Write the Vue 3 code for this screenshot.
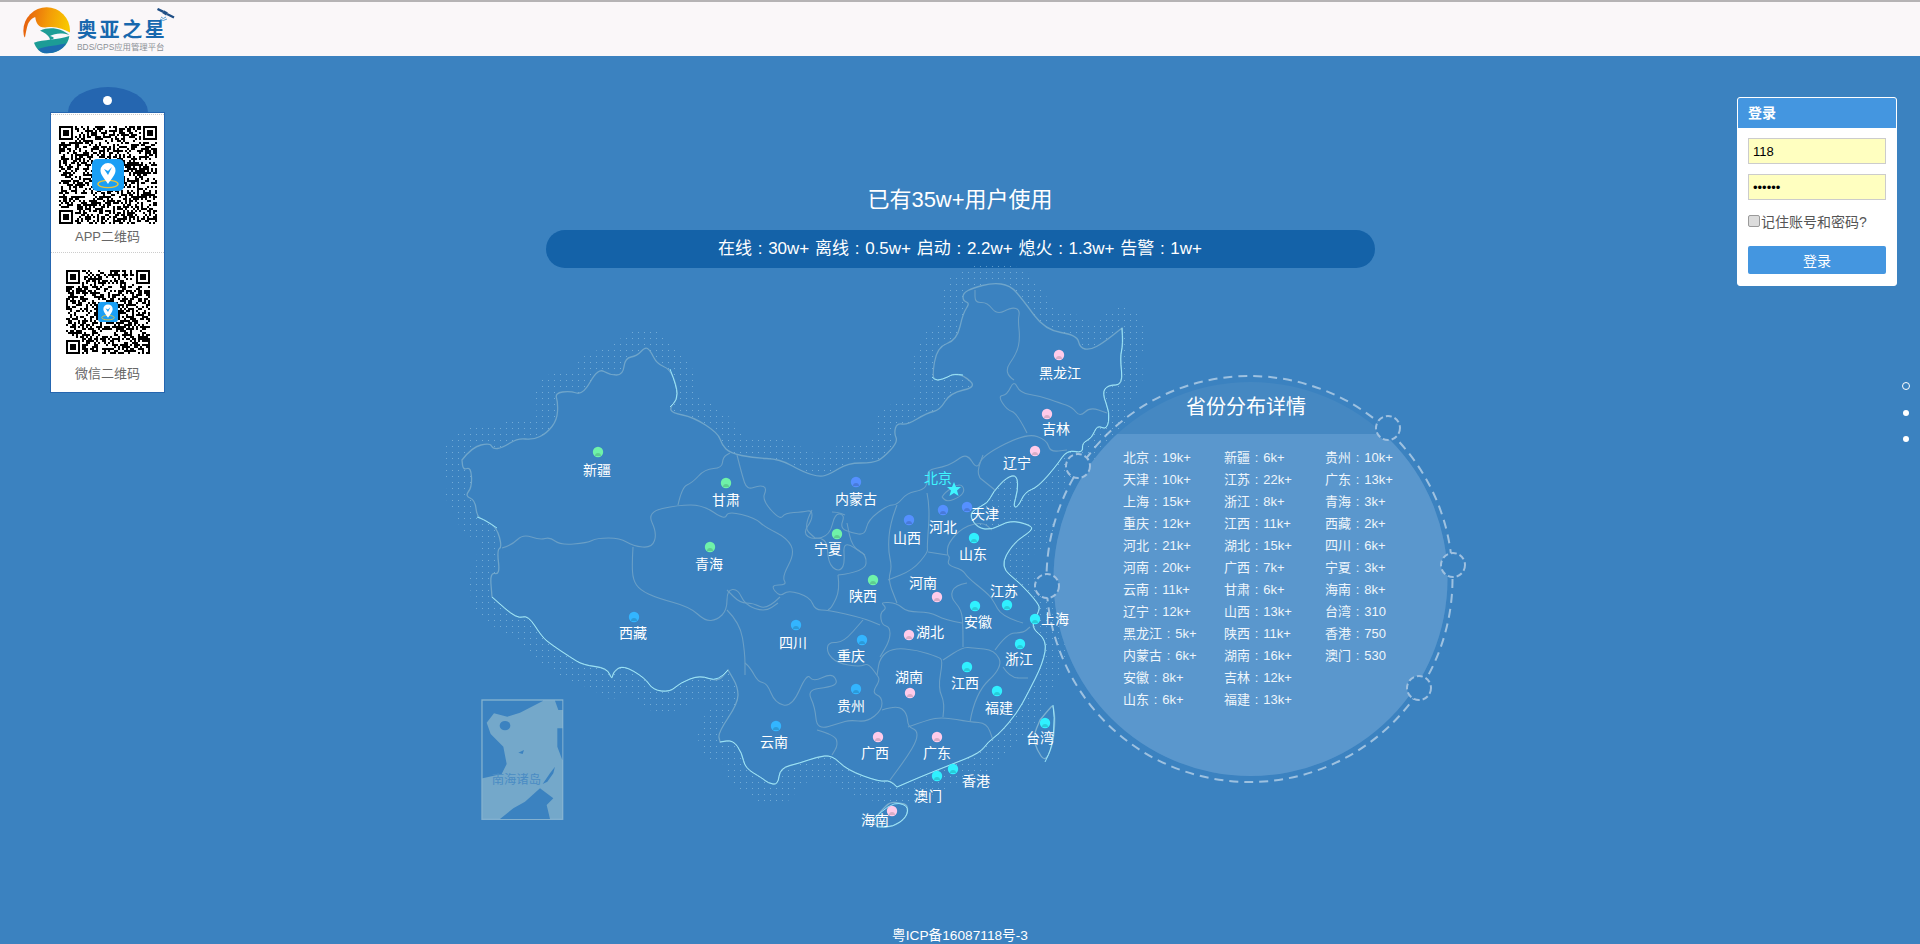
<template>
  <div class="page">
    <header class="top-bar">
      <svg class="logo-mark" width="50" height="50" viewBox="66 18 150 150">
        <defs>
          <linearGradient id="sun" x1="0" y1="0" x2="1" y2="0.2">
            <stop offset="0" stop-color="#e4560f" />
            <stop offset="0.55" stop-color="#f39a08" />
            <stop offset="1" stop-color="#f8c800" />
          </linearGradient>
        </defs>
        <circle cx="140" cy="92" r="70" fill="url(#sun)" />
        <path d="M75 112 C78 95 80 85 84 72 C90 60 100 52 106 52 C108 72 118 86 140 82 C165 78 190 85 214 100 L214 168 L66 168 L66 112Z" fill="#faf7f9" />
        <path d="M120 92 C150 78 185 85 208 105 C185 98 165 100 150 108 C165 112 165 116 150 120 C150 108 135 98 120 92Z" fill="#1f9d96" />
        <path d="M102 128 C130 118 175 120 208 108 C205 135 180 160 140 160 C120 160 108 145 102 128Z" fill="#1c9c96" />
        <path d="M114 147 C140 138 178 136 198 130 C188 150 165 160 140 160 C128 160 120 155 114 147Z" fill="#1d6cb0" />
      </svg>
      <div class="logo-text">
        <div class="logo-name">奥亚之星</div>
        <div class="logo-sub">BDS/GPS应用管理平台</div>
      </div>
      <svg class="satellite" width="18" height="14" viewBox="0 0 18 14">
        <path d="M0.500 1 L6 3.600 M10 6 L17 9.500" stroke="#1f4f86" stroke-width="2.400" fill="none" />
        <path d="M6 3.600 L10 6" stroke="#1f4f86" stroke-width="3.400" fill="none" />
        <path d="M4 9 Q6 12 9 9 M3 11 Q6 14 10 11" stroke="#2f86c8" stroke-width="0.800" fill="none" />
      </svg>
    </header>

    <main class="main">
      <svg class="map" width="1920" height="872" viewBox="0 56 1920 872">
        <defs>
          <pattern id="dots" width="6" height="6" patternUnits="userSpaceOnUse">
            <rect x="2" y="2" width="1" height="1" fill="#a9d3ee" />
          </pattern>
          <clipPath id="lowerPart"><rect x="1040" y="434" width="420" height="350" /></clipPath>
        </defs>

        <path :d="outlinePath" class="halo" />
        <path :d="outlinePath" class="land" />
        <path v-for="(b, i) in borderPaths" :key="i" :d="b" class="border" />
        <path :d="hainanPath" class="island" />
        <path :d="taiwanPath" class="island" />
        <path v-for="(h, i) in brightPaths" :key="'h' + i" :d="h" class="bright" />

        <g transform="translate(470 560) scale(0.3333)">
          <rect x="36" y="420" width="242" height="358" fill="#74a8ca" stroke="#84b2d0" stroke-width="4" />
          <path d="M38 422 H220 L150 458 L112 470 L72 460 L50 488 L62 522 L100 560 L110 612 L95 642 L38 655Z" fill="#3b82c0" />
          <path d="M255 422 H277 V450 H265Z M262 505 H277 V600 L262 560Z" fill="#3b82c0" />
          <path d="M90 777 L130 745 L165 725 L210 685 L250 715 L230 735 L240 777Z" fill="#3b82c0" />
          <ellipse cx="105" cy="497" rx="16" ry="14" fill="#3b82c0" />
          <path d="M218 672 L240 640 L255 620 L250 640 L232 665Z M145 578 L162 570 L158 582Z" fill="#3b82c0" />
          <text x="65" y="671" class="inset-label">南海诸岛</text>
        </g>

        <circle cx="1250.5" cy="579" r="197" fill="#4588c2" />
        <circle cx="1250.5" cy="579" r="197" fill="#5a97cd" clip-path="url(#lowerPart)" />
        <circle cx="1249.5" cy="579" r="203" class="ring" />
        <circle v-for="(c, i) in knobs" :key="'k' + i" :cx="c[0]" :cy="c[1]" r="12" class="knob" />

        <g v-for="p in provinces" :key="p.name">
          <circle :cx="p.x" :cy="p.y" r="5.200" :fill="p.color" />
          <path :d="`M${p.x - 3} ${p.y + 4} a3 3 0 0 1 6 0 z`" :fill="p.color" class="dome" />
          <text :x="p.lx" :y="p.ly + 5" class="label">{{ p.name }}</text>
        </g>
        <text x="938" y="483" class="label capital">北京</text>
        <polygon points="954,482 956,487 961,487 957,490.5 958.6,496 954,493 949.4,496 951,490.5 947,487 952,487" fill="#3ff5ff" />
      </svg>

      <section class="detail">
        <h3 class="detail-title">省份分布详情</h3>
        <ul class="detail-list">
          <li v-for="row in detail" :key="row[0]">{{ row[0] }} : {{ row[1] }}</li>
        </ul>
      </section>

      <aside class="side-left">
        <div class="tag-hang"><span class="tag-hole"></span></div>
        <div class="tag-card">
          <div class="qr-block first">
            <div class="qr big">
              <svg width="98" height="98" viewBox="0 0 49 49" shape-rendering="crispEdges">
                <rect width="49" height="49" fill="#fff" />
                <path :d="qrApp" fill="#000" />
              </svg>
              <svg class="qr-icon" width="32" height="32" viewBox="0 0 32 32">
                <rect width="32" height="32" rx="5" fill="#1a9ff5" />
                <ellipse cx="16" cy="25" rx="10" ry="3.600" fill="none" stroke="#e8c23a" stroke-width="1.400" />
                <path d="M16 25 C12 19 8.500 15.500 8.500 11.500 A7.500 7.500 0 0 1 23.500 11.500 C23.500 15.500 20 19 16 25Z" fill="#fff" />
                <path d="M12 10 L16 16 L20 8 L16 12Z" fill="#1a9ff5" />
              </svg>
            </div>
            <p>APP二维码</p>
          </div>
          <div class="qr-block second">
            <div class="qr small">
              <svg width="84" height="84" viewBox="0 0 42 42" shape-rendering="crispEdges">
                <rect width="42" height="42" fill="#fff" />
                <path :d="qrWechat" fill="#000" />
              </svg>
              <svg class="qr-icon" width="20" height="20" viewBox="0 0 32 32">
                <rect width="32" height="32" rx="5" fill="#1a9ff5" />
                <ellipse cx="16" cy="25" rx="10" ry="3.600" fill="none" stroke="#e8c23a" stroke-width="1.400" />
                <path d="M16 25 C12 19 8.500 15.500 8.500 11.500 A7.500 7.500 0 0 1 23.500 11.500 C23.500 15.500 20 19 16 25Z" fill="#fff" />
                <path d="M12 10 L16 16 L20 8 L16 12Z" fill="#1a9ff5" />
              </svg>
            </div>
            <p>微信二维码</p>
          </div>
        </div>
      </aside>

      <section class="hero">
        <h1 class="hero-title">已有35w+用户使用</h1>
        <div class="hero-bar">在线 : 30w+ 离线 : 0.5w+ 启动 : 2.2w+ 熄火 : 1.3w+ 告警 : 1w+</div>
      </section>

      <aside class="side-right">
        <form class="login" @submit.prevent>
          <div class="login-head">登录</div>
          <div class="login-body">
            <input class="field" type="text" value="118" />
            <input class="field" type="password" value="123456" />
            <label class="remember"><input type="checkbox" class="check" />记住账号和密码?</label>
            <button class="submit" type="submit">登录</button>
          </div>
        </form>
      </aside>

      <div class="pager">
        <span class="dot hollow"></span>
        <span class="dot"></span>
        <span class="dot"></span>
      </div>
    </main>

    <footer class="foot">粤ICP备16087118号-3</footer>
  </div>
</template>

<script setup>
// outline is stitched from these sections so the bright stretches can be redrawn on top
const north = '462,460 472,447 490,443 493,449 502,448 518,438 533,440 547,433 557,420 558,403 555,393 570,391 583,395 598,368 610,375 623,375 625,358 637,356 645,347 650,350 657,364 670,369 677,387 677,400 670,407 672,413 693,417 718,433 722,445 730,453 753,458 780,459 803,472 820,477 830,474 848,463 873,463 883,458 898,442 894,433 897,423 907,425 927,413 940,410 950,393 977,387 963,375 953,374 948,377 937,381 932,377 937,347 957,340 963,313 970,303 963,301 963,293 973,288 992,283 1010,285 1023,300 1045,330 1077,335 1080,348 1090,350 1103,343 1122,328'
const northEast = '1122,328 1123,345 1120,357 1123,385 1108,385 1102,393 1110,413 1107,430 1097,425 1092,438 1082,443 1083,453 1067,450 1057,465 1038,487 1025,492 1018,507 1013,507 1018,490 1017,475 1007,477 993,492 988,503 973,510 970,517 978,528 992,530 1010,520 1030,525 1033,530 1013,543 1000,567 1020,583 1038,603 1040,610 1030,627 1047,640 1043,663 1028,693 1017,713 1000,733 988,742 980,753 950,765 920,777 897,787'
const southCoast = '897,787 890,780 880,782 847,770 832,755 817,757 800,763 780,768 778,785 768,783 762,778 745,768 742,753 733,740 720,742'
const yunnanWest = '720,742 718,733 738,703 738,687 728,670'
const tibetSouth = '728,670 718,682 700,675 680,683 670,692 653,690 645,678 623,665 613,672 612,680 607,668 583,665 570,657 552,645 542,637 528,615 517,619 492,597'
const west = '492,597 490,572 500,575 497,550 502,547 497,528 485,520 477,517 475,500 465,496 472,487 471,467 463,470 462,460'

const hainan = '873,820 882,810 890,802 900,803 908,805 907,817 893,827 877,827 873,820'
const taiwan = '1040,720 1050,708 1053,705 1055,717 1054,735 1052,747 1045,762 1037,750 1033,737 1040,720'

const borders = [
  '502,548 512,545 523,534 540,540 550,537 560,545 587,543 597,538 620,538 633,546 652,548 657,533 647,512 678,505 703,505 725,520 728,511 755,518 765,527 787,538 795,553 782,577 787,585 770,585 780,597 788,590 810,597 815,610 828,610 863,618 880,625',
  '678,505 682,487 692,483 705,469 722,468 723,457 730,453',
  '737,455 742,475 747,490 760,485 767,488 762,500 780,520 785,513 803,512 812,510 812,520 803,533 813,540 830,535 835,513 845,515 840,528 852,533 865,535 868,520 888,505 897,505 907,493 923,490 928,483 927,470 943,467 953,463 967,453 977,470 983,455 1027,433 1047,440 1050,452 1067,450',
  '633,547 632,563 633,580 640,590 657,598 690,607 705,621 717,620 727,610 727,590 738,589 745,605 765,612 778,603',
  '727,610 740,623 745,653 745,675',
  '745,663 750,667 758,682 767,683 775,703 792,707 807,673 813,682 832,673 838,683 830,687 807,690 815,707 817,730 840,723 850,720 867,722 882,710 882,697 872,693 880,680 877,675 868,663 860,667 837,663 827,653 828,642 843,643 863,620',
  '817,730 835,735 838,745 832,755',
  '882,710 897,705 907,713 908,727 917,730 917,740 907,757 890,780',
  '908,727 927,720 943,717 970,722 987,723 993,740',
  '943,717 945,703 938,688 943,660 938,657 917,650 893,648 880,657 877,675',
  '970,722 975,693 1003,667 995,650 973,648 963,647 943,660',
  '1003,667 1010,678 1028,678',
  '995,650 1007,633 1023,633 1030,627',
  '1023,623 1002,617 993,600 987,593 967,577 963,570 947,565 950,557 947,555 948,543 963,527 983,522 992,530',
  '967,583 955,585 950,597 962,610 963,630 963,647',
  '962,623 945,620 930,612 907,612 897,603 880,602 887,608 880,613 882,625 890,627 890,640 880,657',
  '897,505 890,523 888,550 892,567 888,580 897,603',
  '927,493 930,507 927,547 928,552 913,570 888,580',
  '928,552 947,555',
  '838,575 840,590 832,607 828,610',
  '838,575 865,572 867,555 852,547 847,523',
  '832,512 837,512 845,515',
  '815,538 827,537 828,563 838,572 845,565 843,540 865,555',
  '812,510 803,527 815,538',
  '780,597 767,610 753,603 740,603 727,590',
  '1027,433 1017,413 1007,410 998,396 1007,395 1014,380 1020,393 1040,396 1060,403 1072,407 1080,417 1090,407 1107,413',
  '1014,380 1003,373 1017,353 1020,338 1018,320 1020,310 1012,307 997,315 987,302 975,303 975,290',
  '942,497 945,492 960,483 965,490 960,497 947,502 942,497',
  '980,478 995,490',
  '983,455 977,470 980,478'
]

function toPoints(str) {
  return str.split(' ').map((p) => p.split(',').map(Number))
}

// rounds the corners of a hand-traced polyline
function smooth(str, closed = false) {
  const pts = toPoints(str)
  let d = `M${pts[0][0]} ${pts[0][1]}`
  for (let i = 1; i < pts.length - 1; i++) {
    const mx = (pts[i][0] + pts[i + 1][0]) / 2
    const my = (pts[i][1] + pts[i + 1][1]) / 2
    d += ` Q${pts[i][0]} ${pts[i][1]} ${mx} ${my}`
  }
  const last = pts[pts.length - 1]
  d += ` L${last[0]} ${last[1]}`
  return closed ? d + 'Z' : d
}

const outlinePath = smooth([north, northEast, southCoast, yunnanWest, tibetSouth, west].join(' '), true)
const borderPaths = borders.map((b) => smooth(b))
const hainanPath = smooth(hainan, true)
const taiwanPath = smooth(taiwan, true)
const brightPaths = [
  northEast, southCoast, tibetSouth,
  '670,369 677,387 677,400 670,407',
  '963,375 953,374 948,377 937,381 932,377',
  '873,820 890,802 908,805 907,817 893,827 877,827',
  '1053,705 1055,717 1052,747 1045,762',
  '497,528 485,520 477,517'
].map((b) => smooth(b))

const knobs = [[1388, 428], [1078, 466], [1453, 565], [1047, 586], [1419, 688]]

const GREEN = '#6ff2a9'
const BLUE = '#5590ff'
const SKY = '#33b5ff'
const CYAN = '#30f0ff'
const PINK = '#ffcbea'

const provinces = [
  { name: '新疆', x: 598, y: 452, lx: 597, ly: 470, color: GREEN },
  { name: '甘肃', x: 726, y: 483, lx: 726, ly: 500, color: GREEN },
  { name: '青海', x: 710, y: 547, lx: 709, ly: 564, color: GREEN },
  { name: '宁夏', x: 837, y: 534, lx: 828, ly: 549, color: GREEN },
  { name: '陕西', x: 873, y: 580, lx: 863, ly: 596, color: GREEN },
  { name: '内蒙古', x: 856, y: 482, lx: 856, ly: 499, color: BLUE },
  { name: '山西', x: 909, y: 520, lx: 907, ly: 538, color: BLUE },
  { name: '河北', x: 943, y: 510, lx: 943, ly: 527, color: BLUE },
  { name: '天津', x: 967, y: 507, lx: 985, ly: 514, color: BLUE },
  { name: '西藏', x: 634, y: 617, lx: 633, ly: 633, color: SKY },
  { name: '四川', x: 796, y: 625, lx: 793, ly: 643, color: SKY },
  { name: '重庆', x: 862, y: 640, lx: 851, ly: 656, color: SKY },
  { name: '贵州', x: 856, y: 689, lx: 851, ly: 706, color: SKY },
  { name: '云南', x: 776, y: 726, lx: 774, ly: 742, color: SKY },
  { name: '山东', x: 974, y: 538, lx: 973, ly: 554, color: CYAN },
  { name: '江苏', x: 1007, y: 605, lx: 1004, ly: 591, color: CYAN },
  { name: '安徽', x: 975, y: 606, lx: 978, ly: 622, color: CYAN },
  { name: '上海', x: 1035, y: 619, lx: 1055, ly: 619, color: CYAN },
  { name: '浙江', x: 1020, y: 644, lx: 1019, ly: 659, color: CYAN },
  { name: '江西', x: 967, y: 667, lx: 965, ly: 683, color: CYAN },
  { name: '福建', x: 997, y: 691, lx: 999, ly: 708, color: CYAN },
  { name: '台湾', x: 1045, y: 723, lx: 1040, ly: 738, color: CYAN },
  { name: '香港', x: 953, y: 769, lx: 976, ly: 781, color: CYAN },
  { name: '澳门', x: 937, y: 776, lx: 928, ly: 796, color: CYAN },
  { name: '黑龙江', x: 1059, y: 355, lx: 1060, ly: 373, color: PINK },
  { name: '吉林', x: 1047, y: 414, lx: 1056, ly: 429, color: PINK },
  { name: '辽宁', x: 1035, y: 451, lx: 1017, ly: 463, color: PINK },
  { name: '河南', x: 937, y: 597, lx: 923, ly: 583, color: PINK },
  { name: '湖北', x: 909, y: 635, lx: 930, ly: 632, color: PINK },
  { name: '湖南', x: 910, y: 693, lx: 909, ly: 677, color: PINK },
  { name: '广西', x: 878, y: 737, lx: 875, ly: 753, color: PINK },
  { name: '广东', x: 937, y: 737, lx: 937, ly: 753, color: PINK },
  { name: '海南', x: 892, y: 811, lx: 875, ly: 820, color: PINK }
]

const detail = [
  ['北京', '19k+'], ['天津', '10k+'], ['上海', '15k+'], ['重庆', '12k+'], ['河北', '21k+'], ['河南', '20k+'],
  ['云南', '11k+'], ['辽宁', '12k+'], ['黑龙江', '5k+'], ['内蒙古', '6k+'], ['安徽', '8k+'], ['山东', '6k+'],
  ['新疆', '6k+'], ['江苏', '22k+'], ['浙江', '8k+'], ['江西', '11k+'], ['湖北', '15k+'], ['广西', '7k+'],
  ['甘肃', '6k+'], ['山西', '13k+'], ['陕西', '11k+'], ['湖南', '16k+'], ['吉林', '12k+'], ['福建', '13k+'],
  ['贵州', '10k+'], ['广东', '13k+'], ['青海', '3k+'], ['西藏', '2k+'], ['四川', '6k+'], ['宁夏', '3k+'],
  ['海南', '8k+'], ['台湾', '310'], ['香港', '750'], ['澳门', '530']
]

// placeholder matrix: right finder positions, scattered modules
function qrPath(size, seed) {
  let s = seed
  const next = () => {
    s = (s * 1103515245 + 12345) & 0x7fffffff
    return (s >> 12) % 100
  }
  let d = ''
  const inFinder = (x, y) =>
    (x < 8 && y < 8) || (x >= size - 8 && y < 8) || (x < 8 && y >= size - 8)
  for (let y = 0; y < size; y++) {
    for (let x = 0; x < size; x++) {
      if (!inFinder(x, y) && next() < 50) d += `M${x} ${y}h1v1h-1z`
    }
  }
  const finder = (x, y) =>
    `M${x} ${y}h7v1h-7z M${x} ${y + 6}h7v1h-7z M${x} ${y + 1}h1v5h-1z M${x + 6} ${y + 1}h1v5h-1z M${x + 2} ${y + 2}h3v3h-3z`
  d += finder(0, 0) + finder(size - 7, 0) + finder(0, size - 7)
  return d
}

const qrApp = qrPath(49, 20240)
const qrWechat = qrPath(42, 771)
</script>

<style scoped>
.page {
  display: flex;
  flex-direction: column;
  height: 944px;
  overflow: hidden;
  background: #3b82c0;
  color: #fff;
  font-family: "Liberation Sans", "Noto Sans CJK SC", sans-serif;
}

.top-bar {
  display: flex;
  align-items: flex-start;
  flex-shrink: 0;
  box-sizing: border-box;
  height: 56px;
  padding-left: 22px;
  background: #faf7f9;
  border-top: 2px solid #b5b3b5;
}

.logo-mark {
  margin-top: 4px;
}

.logo-text {
  margin: 17px 0 0 5px;
}

.logo-name {
  font-size: 20px;
  line-height: 22px;
  font-weight: 700;
  letter-spacing: 2.6px;
  color: #1768ae;
}

.logo-sub {
  margin-top: 1px;
  font-size: 8.4px;
  line-height: 10px;
  color: #8b9096;
  white-space: nowrap;
}

.satellite {
  margin: 6px 0 0 -10px;
}

.main {
  position: relative;
  flex: 1;
  display: grid;
  grid-template-columns: 1fr 829px 1fr;
  align-items: start;
}

.map {
  position: absolute;
  left: 0;
  top: 0;
}

.halo {
  fill: none;
  stroke: url(#dots);
  stroke-width: 42;
  stroke-linejoin: round;
  opacity: 0.5;
}

.land {
  fill: #3b82c0;
  stroke: #6fa5ca;
  stroke-width: 1.3;
}

.border {
  fill: none;
  stroke: #6a9fc6;
  stroke-width: 1.1;
}

.island {
  fill: #3b82c0;
  stroke: #7db0d0;
  stroke-width: 1.3;
}

.bright {
  fill: none;
  stroke: #9eeeff;
  stroke-width: 1;
  opacity: 0.9;
}

.label {
  fill: #fff;
  font-size: 14px;
  text-anchor: middle;
}

.capital {
  fill: #3ff5ff;
}

.dome {
  filter: brightness(0.85);
}

.inset-label {
  fill: #4a8cc4;
  font-size: 37px;
}

.ring {
  fill: none;
  stroke: rgba(255, 255, 255, 0.5);
  stroke-width: 2;
  stroke-dasharray: 9 6;
}

.knob {
  fill: #3b82c0;
  stroke: #9fc0df;
  stroke-width: 2;
  stroke-dasharray: 6 3;
}

.detail {
  position: absolute;
  left: 1053px;
  top: 326px;
  width: 386px;
}

.detail-title {
  margin: 11px 0 0;
  font-size: 20px;
  line-height: 28px;
  font-weight: 400;
  text-align: center;
}

.detail-list {
  display: grid;
  grid-template-rows: repeat(12, 22px);
  grid-template-columns: repeat(3, 101px);
  grid-auto-flow: column;
  margin: 26px 0 0 70px;
  padding: 0;
  list-style: none;
  font-size: 13px;
  line-height: 22px;
  word-spacing: 1.2px;
  white-space: nowrap;
  color: #eef5fb;
}

.side-left {
  position: relative;
  width: 115px;
  margin: 31px 0 0 50px;
}

.tag-hang {
  display: flex;
  justify-content: center;
  box-sizing: border-box;
  width: 80px;
  height: 25px;
  margin: 0 auto;
  padding-top: 9px;
  background: #2566b0;
  border-radius: 40px 40px 0 0 / 25px 25px 0 0;
}

.tag-hole {
  width: 9px;
  height: 9px;
  background: #fff;
  border-radius: 50%;
}

.tag-card {
  box-sizing: border-box;
  height: 281px;
  background: #fff;
  border: 1px solid #2566b0;
}

.qr-block {
  display: flex;
  flex-direction: column;
  align-items: center;
}

.qr-block p {
  margin: 0;
  font-size: 13px;
  line-height: 18px;
  color: #666;
}

.first {
  height: 139px;
  padding-top: 11px;
  box-sizing: border-box;
  border-top: 1px dotted #ccc;
  margin-top: 1px;
  border-bottom: 1px dotted #ccc;
}

.first p {
  margin-top: 4px;
}

.second {
  padding-top: 17px;
}

.second p {
  margin-top: 11px;
}

.qr {
  position: relative;
  display: flex;
}

.qr-icon {
  position: absolute;
  left: 50%;
  top: 50%;
  transform: translate(-50%, -50%);
}

.hero {
  grid-column: 2;
  text-align: center;
}

.hero-title {
  margin: 129px 0 0;
  font-size: 22px;
  line-height: 30px;
  font-weight: 400;
}

.hero-bar {
  height: 38px;
  margin-top: 15px;
  font-size: 17px;
  line-height: 38px;
  word-spacing: 1px;
  background: #1462a8;
  border-radius: 19px;
}

.side-right {
  position: relative;
  display: flex;
  justify-content: flex-end;
  padding: 41px 23px 0 0;
}

.login {
  box-sizing: border-box;
  width: 160px;
  height: 189px;
  background: #fff;
  border: 1px solid #fff;
  border-radius: 3px;
  overflow: hidden;
}

.login-head {
  height: 30px;
  padding-left: 10px;
  font-size: 14px;
  font-weight: 700;
  line-height: 30px;
  background: #4496e0;
}

.login-body {
  display: flex;
  flex-direction: column;
  padding: 10px;
}

.field {
  box-sizing: border-box;
  width: 138px;
  height: 26px;
  margin: 0 0 10px;
  padding: 0 4px;
  font: 13px "Liberation Sans", sans-serif;
  color: #000;
  background: #ffffc0;
  border: 1px solid #ccc;
  outline: none;
}

.remember {
  display: flex;
  align-items: flex-start;
  height: 20px;
  margin-top: 2px;
  font-size: 14px;
  line-height: 20px;
  color: #555;
  white-space: nowrap;
}

.check {
  appearance: none;
  box-sizing: border-box;
  width: 12px;
  height: 12px;
  margin: 3px 1px 0 0;
  background: #dcdcdc;
  border: 1px solid #9a9a9a;
  border-radius: 2px;
}

.submit {
  height: 28px;
  margin-top: 14px;
  padding: 0;
  font: 14px "Liberation Sans", "Noto Sans CJK SC", sans-serif;
  color: #fff;
  background: #4496e0;
  border: none;
  border-radius: 2px;
}

.pager {
  position: absolute;
  right: 10px;
  top: 326px;
  display: flex;
  flex-direction: column;
  align-items: center;
  gap: 20px;
}

.dot {
  width: 6px;
  height: 6px;
  background: #fff;
  border-radius: 50%;
}

.hollow {
  box-sizing: border-box;
  width: 8px;
  height: 8px;
  background: transparent;
  border: 1px solid #fff;
}

.foot {
  position: relative;
  flex-shrink: 0;
  height: 16px;
  font-size: 13.7px;
  line-height: 16px;
  text-align: center;
}
</style>
